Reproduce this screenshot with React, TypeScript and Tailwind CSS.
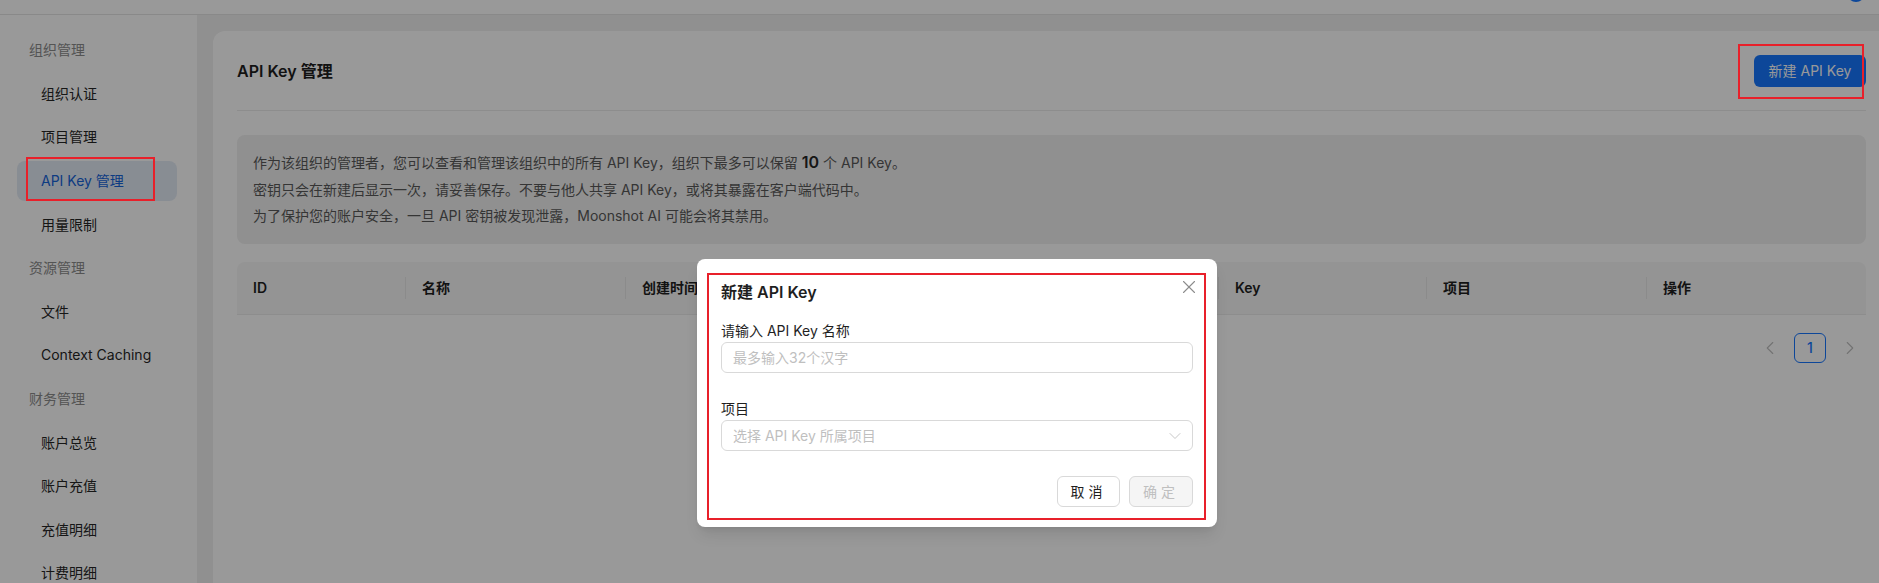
import React from "react";
import { X, ChevronDown, ChevronLeft, ChevronRight } from "lucide-react";

const FONT = '"Inter", "Noto Sans CJK SC", "Noto Sans", sans-serif';

type NavItem = { label: string; heading?: boolean; active?: boolean };

const nav: NavItem[] = [
  { label: "组织管理", heading: true },
  { label: "组织认证" },
  { label: "项目管理" },
  { label: "API Key 管理", active: true },
  { label: "用量限制" },
  { label: "资源管理", heading: true },
  { label: "文件" },
  { label: "Context Caching" },
  { label: "财务管理", heading: true },
  { label: "账户总览" },
  { label: "账户充值" },
  { label: "充值明细" },
  { label: "计费明细" },
];

const cols = [
  { label: "ID", w: 169 },
  { label: "名称", w: 220 },
  { label: "创建时间", w: 297 },
  { label: "最近使用时间", w: 296 },
  { label: "Key", w: 208 },
  { label: "项目", w: 220 },
  { label: "操作", w: 219 },
];

export default function App() {
  return (
    <div
      className="relative h-[583px] w-[1879px] overflow-hidden bg-white text-[#1f1f1f]"
      style={{ fontFamily: FONT }}
    >
      {/* Top bar */}
      <div className="relative h-[15px] border-b border-[#e5e5e5] bg-white">
        <div className="absolute left-[1847px] top-[-16px] h-[18px] w-[18px] rounded-full bg-[#1677ff]" />
      </div>

      <div className="flex h-[568px]">
        {/* Sidebar */}
        <aside className="w-[197px] shrink-0 bg-white pt-[13px]">
          {nav.map((item) => (
            <div key={item.label} className="flex h-[43.6px] items-center">
              {item.heading ? (
                <div className="pl-[29px] text-[14px] text-[#8c8c8c]">{item.label}</div>
              ) : (
                <div
                  className={
                    item.active
                      ? "ml-[17px] flex h-10 w-[160px] items-center rounded-lg bg-[#e3ebf5] pl-[24px] text-[14px] text-[#1664d9]"
                      : "ml-[17px] flex h-10 w-[160px] items-center pl-[24px] text-[14px] text-[#262626]"
                  }
                >
                  {item.label}
                </div>
              )}
            </div>
          ))}
        </aside>

        {/* Main */}
        <main className="flex-1 overflow-hidden bg-[#f0f0f0] pl-4 pt-4">
          <div className="h-[600px] w-[1677px] shrink-0 rounded-xl bg-white px-6">
            {/* header */}
            <div className="flex h-20 items-center justify-between border-b border-[#ebebeb]">
              <div className="text-[16px] font-semibold text-[#1f1f1f]">API Key 管理</div>
              <button className="flex h-8 w-[112px] items-center justify-center rounded-md bg-[#1677ff] text-[14px] text-white">
                新建 API Key
              </button>
            </div>

            {/* info */}
            <div className="mt-[24px] rounded-lg bg-[#f0f0f0] px-4 py-[14px] text-[14px] leading-[26.5px] text-[#595959]">
              <div>
                作为该组织的管理者，您可以查看和管理该组织中的所有 API Key，组织下最多可以保留{" "}
                <span className="text-[16px] font-semibold text-[#262626]">10</span> 个 API Key。
              </div>
              <div>密钥只会在新建后显示一次，请妥善保存。不要与他人共享 API Key，或将其暴露在客户端代码中。</div>
              <div>为了保护您的账户安全，一旦 API 密钥被发现泄露，Moonshot AI 可能会将其禁用。</div>
            </div>

            {/* table header */}
            <div className="mt-[18px] flex h-[53px] rounded-t-lg border-b border-[#ebebeb] bg-[#f7f7f7]">
              {cols.map((c, i) => (
                <div
                  key={c.label}
                  className="relative flex h-full items-center pl-4 text-[14px] font-semibold text-[#1f1f1f]"
                  style={{ width: c.w }}
                >
                  {c.label}
                  {i < cols.length - 1 && (
                    <div className="absolute right-0 top-1/2 h-[22px] w-px -translate-y-1/2 bg-[#e8e8e8]" />
                  )}
                </div>
              ))}
            </div>

            {/* pagination */}
            <div className="mt-[18px] flex items-center justify-end gap-[13px] pr-[5px]">
              <ChevronLeft className="h-[22px] w-[22px] text-[#bfbfbf]" strokeWidth={1.2} />
              <div className="flex h-[30px] w-[32px] items-center justify-center rounded-md border border-[#1677ff] text-[14px] font-medium text-[#1677ff]">
                1
              </div>
              <ChevronRight className="h-[22px] w-[22px] text-[#bfbfbf]" strokeWidth={1.2} />
            </div>
          </div>
        </main>
      </div>

      {/* Overlay */}
      <div className="absolute inset-0 bg-black/40" />

      {/* Modal */}
      <div className="absolute left-[697px] top-[259px] w-[520px] rounded-lg bg-white px-6 pb-[20px] pt-[22px] shadow-lg">
        <X className="absolute left-[481px] top-[17px] h-[22px] w-[22px] text-[#8c8c8c]" strokeWidth={1.2} />
        <div className="flex h-[22px] items-center text-[16px] font-semibold text-[#1f1f1f]">新建 API Key</div>
        <div className="mt-4 flex h-[22px] items-center text-[14px] text-[#1f1f1f]">请输入 API Key 名称</div>
        <div className="mt-px flex h-[31px] items-center rounded-md border border-[#d9d9d9] px-[11px] text-[14px] text-[#bfbfbf]">
          最多输入32个汉字
        </div>
        <div className="mt-6 flex h-[22px] items-center text-[14px] text-[#1f1f1f]">项目</div>
        <div className="mt-px flex h-[31px] items-center justify-between rounded-md border border-[#d9d9d9] pl-[11px] pr-[7px] text-[14px] text-[#bfbfbf]">
          <span>选择 API Key 所属项目</span>
          <ChevronDown className="h-[20px] w-[20px] text-[#c8c8c8]" strokeWidth={1.2} />
        </div>
        <div className="mt-[25px] flex justify-end gap-[9px]">
          <button className="flex h-[31px] w-[63px] items-center justify-center rounded-md border border-[#d9d9d9] bg-white text-[14px] tracking-[4px] text-[#1f1f1f]">
            取消
          </button>
          <button className="flex h-[31px] w-[64px] items-center justify-center rounded-md border border-[#d9d9d9] bg-[#f5f5f5] text-[14px] tracking-[4px] text-[#bfbfbf]">
            确定
          </button>
        </div>
      </div>

      {/* Annotation boxes */}
      <div className="pointer-events-none absolute left-[26px] top-[157px] h-[44px] w-[129px] border-2 border-[#e8202a]" />
      <div className="pointer-events-none absolute left-[1738px] top-[44px] h-[55px] w-[126px] border-2 border-[#e8202a]" />
      <div className="pointer-events-none absolute left-[707px] top-[273px] h-[247px] w-[499px] border-2 border-[#e8202a]" />
    </div>
  );
}
